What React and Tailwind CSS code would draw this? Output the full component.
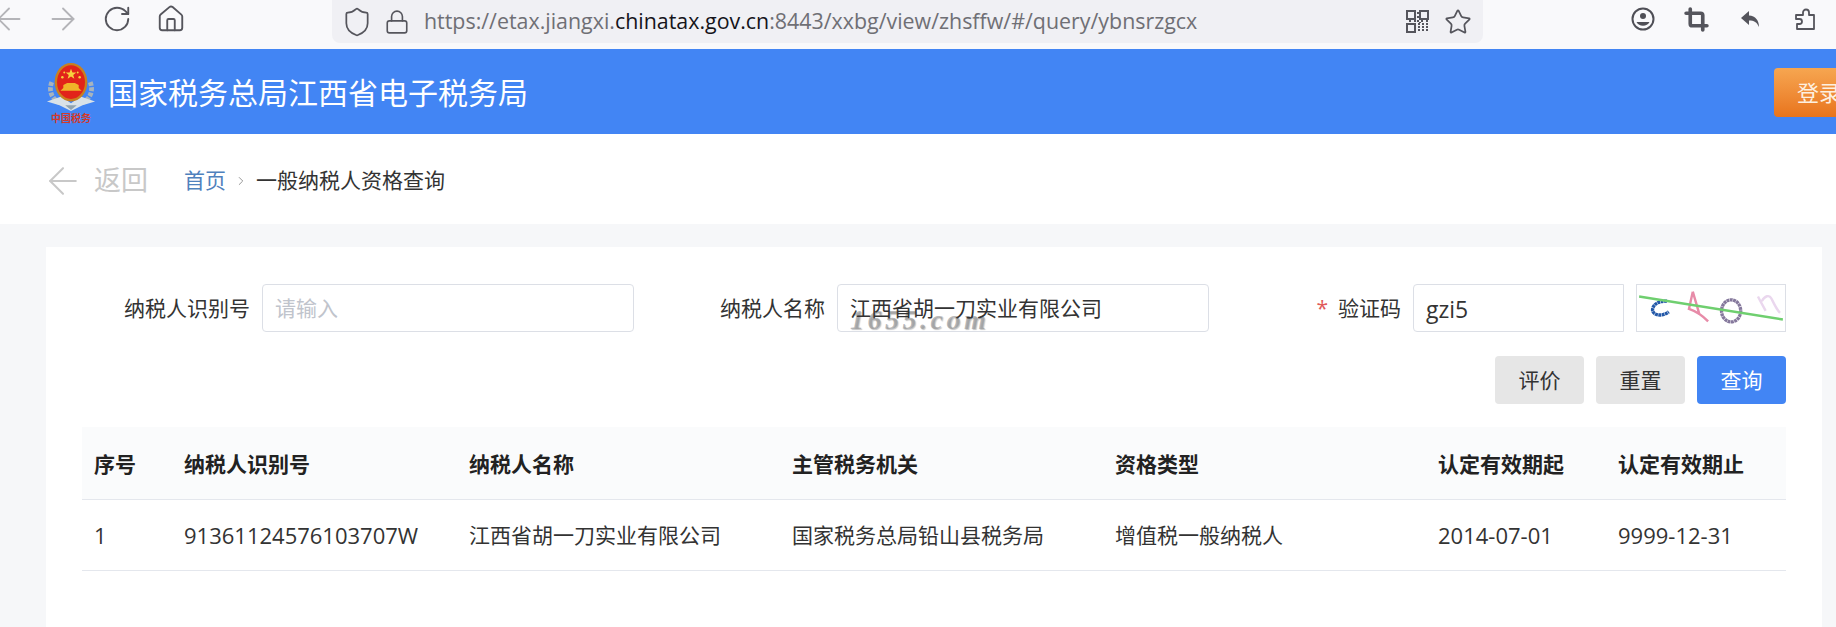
import { ArrowLeft, ArrowRight, RotateCw, Home, Shield, Lock, Star, Crop, ChevronRight } from "lucide-react";

const font = "font-['Open_Sans','Noto_Sans_CJK_SC',sans-serif]";

const columns = [
  { title: "序号", value: "1", width: "w-[90px]", cell: "text-[22px]" },
  { title: "纳税人识别号", value: "91361124576103707W", width: "w-[285px]", cell: "text-[22px]" },
  { title: "纳税人名称", value: "江西省胡一刀实业有限公司", width: "w-[323px]", cell: "text-[21px]" },
  { title: "主管税务机关", value: "国家税务总局铅山县税务局", width: "w-[323px]", cell: "text-[21px]" },
  { title: "资格类型", value: "增值税一般纳税人", width: "w-[323px]", cell: "text-[21px]" },
  { title: "认定有效期起", value: "2014-07-01", width: "w-[180px]", cell: "text-[22px]" },
  { title: "认定有效期止", value: "9999-12-31", width: "w-[180px]", cell: "text-[22px]" },
];

const QrIcon = () => (
  <svg width="23" height="23" viewBox="0 0 23 23" fill="none" stroke="#55555c" strokeWidth="2">
    <rect x="1" y="1" width="8" height="8" />
    <rect x="14" y="1" width="8" height="8" />
    <rect x="1" y="14" width="8" height="8" />
    <path d="M11 3h2M11 7h2M3 11h2M8 11h5M15 11h2M20 11h2M12 14h2M16 14h2M20 14h2M12 17h2M16 17h2M20 17h2M12 20h2M16 20h2M20 20h2M14 12v1" strokeDasharray="2 1" />
  </svg>
);

const AccountIcon = () => (
  <svg width="24" height="24" viewBox="0 0 24 24" fill="none" stroke="#4f4f56" strokeWidth="2">
    <circle cx="12" cy="12" r="10.5" />
    <circle cx="12" cy="9" r="3" fill="#4f4f56" stroke="none" />
    <path d="M5.5 15h13a7.5 7.5 0 0 1-13 0z" fill="#4f4f56" stroke="none" />
  </svg>
);

const ReplyIcon = () => (
  <svg width="24" height="24" viewBox="0 0 24 24" fill="#55555c">
    <path d="M10 4 2 11l8 7v-4.6c5 0 8 1.6 10 6.6 0-6.500-3.500-11-10-11.400z" />
  </svg>
);

const PuzzleIcon = () => (
  <svg width="24" height="24" viewBox="0 0 24 24" fill="none" stroke="#55555c" strokeWidth="1.800" strokeLinejoin="round">
    <path d="M3 8h7V5.500a3 3 0 0 1 6 0V8h5v14H4v-5h2.500a2.500 2.500 0 0 0 0-5H3z" />
  </svg>
);

const Emblem = () => (
  <div className="flex w-[50px] flex-col items-center">
    <svg width="50" height="50" viewBox="0 0 52 52">
      <path d="M6 22C2 32 7 41 16 44" fill="none" stroke="#a8b4bd" strokeWidth="5" strokeDasharray="4 1.500" />
      <path d="M46 22c4 10-1 19-10 22" fill="none" stroke="#a8b4bd" strokeWidth="5" strokeDasharray="4 1.500" />
      <path d="M1 42 16 37 26 44 36 37 51 42 38 46 26 52 14 46z" fill="#d9e2e8" />
      <path d="M20 46h12l-6 5z" fill="#8fa3b0" />
      <ellipse cx="26" cy="22" rx="17" ry="20" fill="#c9801f" />
      <ellipse cx="26" cy="22" rx="14.500" ry="17.500" fill="#e2231a" />
      <path d="m26 8 1.500 4h4l-3.200 2.500 1.200 4-3.500-2.500-3.500 2.500 1.200-4-3.200-2.500h4z" fill="#f7d23e" />
      <circle cx="17" cy="17" r="1.300" fill="#f7d23e" />
      <circle cx="35" cy="17" r="1.300" fill="#f7d23e" />
      <circle cx="19" cy="12" r="1" fill="#f7d23e" />
      <circle cx="33" cy="12" r="1" fill="#f7d23e" />
      <path d="M15 31h22l-3-3v-3l-4-2h-8l-4 2v3z" fill="#f0b429" />
    </svg>
    <span className="mt-[2px] text-[10px] leading-none font-bold text-[#d3392b] whitespace-nowrap">中国税务</span>
  </div>
);

const Captcha = () => (
  <svg className="ml-3 border border-[#dcdfe6] bg-white" width="150" height="48" viewBox="0 0 150 48" fill="none">
    <path d="M29 17c-9-1-15 4-15 9 0 5 9 8 17 2" stroke="#2358a8" strokeWidth="3.500" strokeDasharray="3 .5" />
    <path d="M56 7 52 25c6 2 14 7 20 13M56 7l7 24" stroke="#e78ba8" strokeWidth="2.500" />
    <ellipse cx="96" cy="27" rx="10" ry="11.500" stroke="#85789c" strokeWidth="3.500" strokeDasharray="3 .5" />
    <path d="M124 12c3 6 6 11 8 15M128 17c3-6 8-7 10-3s5 11 9 15" stroke="#ead7ee" strokeWidth="2.500" />
    <path d="M0 12 150 36" stroke="#6fcf6f" strokeWidth="2.500" />
  </svg>
);

const Field = ({ label, value, placeholder, required, children, className }) => (
  <div className={`flex items-center ${className}`}>
    <label className="flex items-center pt-[1px] text-[21px] text-[#333] whitespace-nowrap">
      {required && <span className="mr-[10px] text-[#e05a5a]">*</span>}
      {label}
    </label>
    {children || (
      <div className={`ml-3 h-12 w-[372px] flex items-center rounded border border-[#dcdfe6] bg-white px-3 pt-[2px] text-[21px] ${placeholder ? "text-[#c0c4cc]" : "text-[#333]"}`}>
        <span className="relative z-10">{value || placeholder}</span>
      </div>
    )}
  </div>
);

export default function App() {
  return (
    <div className={`${font} w-[1836px] h-[627px] overflow-hidden flex flex-col bg-[#f6f7f9]`}>
      {/* browser chrome */}
      <div className="h-[49px] shrink-0 flex bg-[#f9f9fb] text-[#55555c]">
        <div className="w-[350px] -ml-[18px] flex items-center pb-[11px] [&>div]:w-[54px] [&>div]:flex [&>div]:justify-center">
          <div><ArrowLeft size={36} strokeWidth={1.2} className="text-[#b4b4b8]" /></div>
          <div><ArrowRight size={36} strokeWidth={1.2} className="text-[#b4b4b8]" /></div>
          <div><RotateCw size={30} strokeWidth={1.5} /></div>
          <div><Home size={30} strokeWidth={1.5} /></div>
        </div>
        <div className="w-[1151px] h-[43px] flex items-center rounded-b-lg bg-[#f0f0f4] pl-[9px] pr-[11px]">
          <Shield size={32} strokeWidth={1.3} />
          <Lock size={26} strokeWidth={1.5} className="ml-[11px]" />
          <div className="ml-[14px] flex-1 text-[21.4px] text-[#6f6f75] whitespace-nowrap">
            https://etax.jiangxi.<span className="text-[#15141a]">chinatax.gov.cn</span>:8443/xxbg/view/zhsffw/#/query/ybnsrzgcx
          </div>
          <QrIcon />
          <Star size={28} strokeWidth={1.5} className="ml-[15px]" />
        </div>
        <div className="flex-1 flex items-center gap-[30px] pl-[148px] pb-[11px]">
          <AccountIcon />
          <Crop size={25} strokeWidth={3.5} className="-ml-[1px]" />
          <ReplyIcon />
          <PuzzleIcon />
        </div>
      </div>

      {/* site header */}
      <header className="h-[85px] shrink-0 flex items-center bg-[#4285f4] pl-[46px] overflow-hidden">
        <Emblem />
        <h1 className="ml-[12px] mt-[3px] text-[30px] leading-none font-normal text-white whitespace-nowrap">国家税务总局江西省电子税务局</h1>
        <button className="ml-auto -mr-[40px] mt-[2px] h-[49px] w-[102px] rounded pl-[23px] text-left text-[22px] text-[#fdf0e0] bg-gradient-to-b from-[#f6a650] to-[#e8741a]">登录</button>
      </header>

      {/* breadcrumb */}
      <div className="h-[90px] shrink-0 flex items-center bg-white pl-[41px] pt-[3px]">
        <ArrowLeft size={44} strokeWidth={1.1} className="text-[#c8c8c8]" />
        <span className="ml-[9px] text-[27px] text-[#c8c8c8]">返回</span>
        <span className="ml-[36px] text-[21px] text-[#4f81bd]">首页</span>
        <ChevronRight size={14} strokeWidth={1.5} className="mx-[8px] text-[#888]" />
        <span className="text-[21px] text-[#333]">一般纳税人资格查询</span>
      </div>

      {/* query card */}
      <main className="flex-1 mt-[23px] ml-[46px] mr-[14px] bg-white px-[36px] pt-[37px]">
        <div className="flex items-center">
          <Field label="纳税人识别号" placeholder="请输入" className="ml-[42px]" />
          <div className="ml-[86px]">
            <Field label="纳税人名称" value="江西省胡一刀实业有限公司" />
          </div>
          <Field label="验证码" required className="ml-auto">
            <div className="ml-3 h-12 w-[211px] flex items-center rounded-l border border-[#dcdfe6] bg-white px-3 pt-[2px] text-[23px] text-[#333]">gzi5</div>
            <Captcha />
          </Field>
        </div>

        <div className="mt-[24px] flex justify-end gap-3">
          <button className="h-12 w-[89px] rounded bg-[#e6e6e6] pt-[1px] text-[21px] text-[#333]">评价</button>
          <button className="h-12 w-[89px] rounded bg-[#e6e6e6] pt-[1px] text-[21px] text-[#333]">重置</button>
          <button className="h-12 w-[89px] rounded bg-[#4285f4] pt-[1px] text-[21px] text-white">查询</button>
        </div>

        <table className="mt-[23px] w-full table-fixed text-left text-[#333]">
          <colgroup>
            {columns.map((c) => (
              <col key={c.title} className={c.width} />
            ))}
          </colgroup>
          <thead>
            <tr className="h-[72px] bg-[#fafbfc] border-b border-[#e4e7ed]">
              {columns.map((c) => (
                <th key={c.title} className="px-3 pt-[4px] text-[21px] font-bold text-[#222]">{c.title}</th>
              ))}
            </tr>
          </thead>
          <tbody>
            <tr className="h-[71px] border-b border-[#e4e7ed]">
              {columns.map((c) => (
                <td key={c.title} className={`px-3 pt-[2px] whitespace-nowrap ${c.cell}`}>{c.value}</td>
              ))}
            </tr>
          </tbody>
        </table>
      </main>

      {/* site watermark baked into the screenshot */}
      <div className="absolute left-[850px] top-[299px] font-['Liberation_Serif',serif] italic font-bold text-[28px] tracking-[3.5px] text-[#8f8f8f]/60 [text-shadow:1px_1px_1px_#c4c4c4] pointer-events-none">1655.com</div>
    </div>
  );
}
